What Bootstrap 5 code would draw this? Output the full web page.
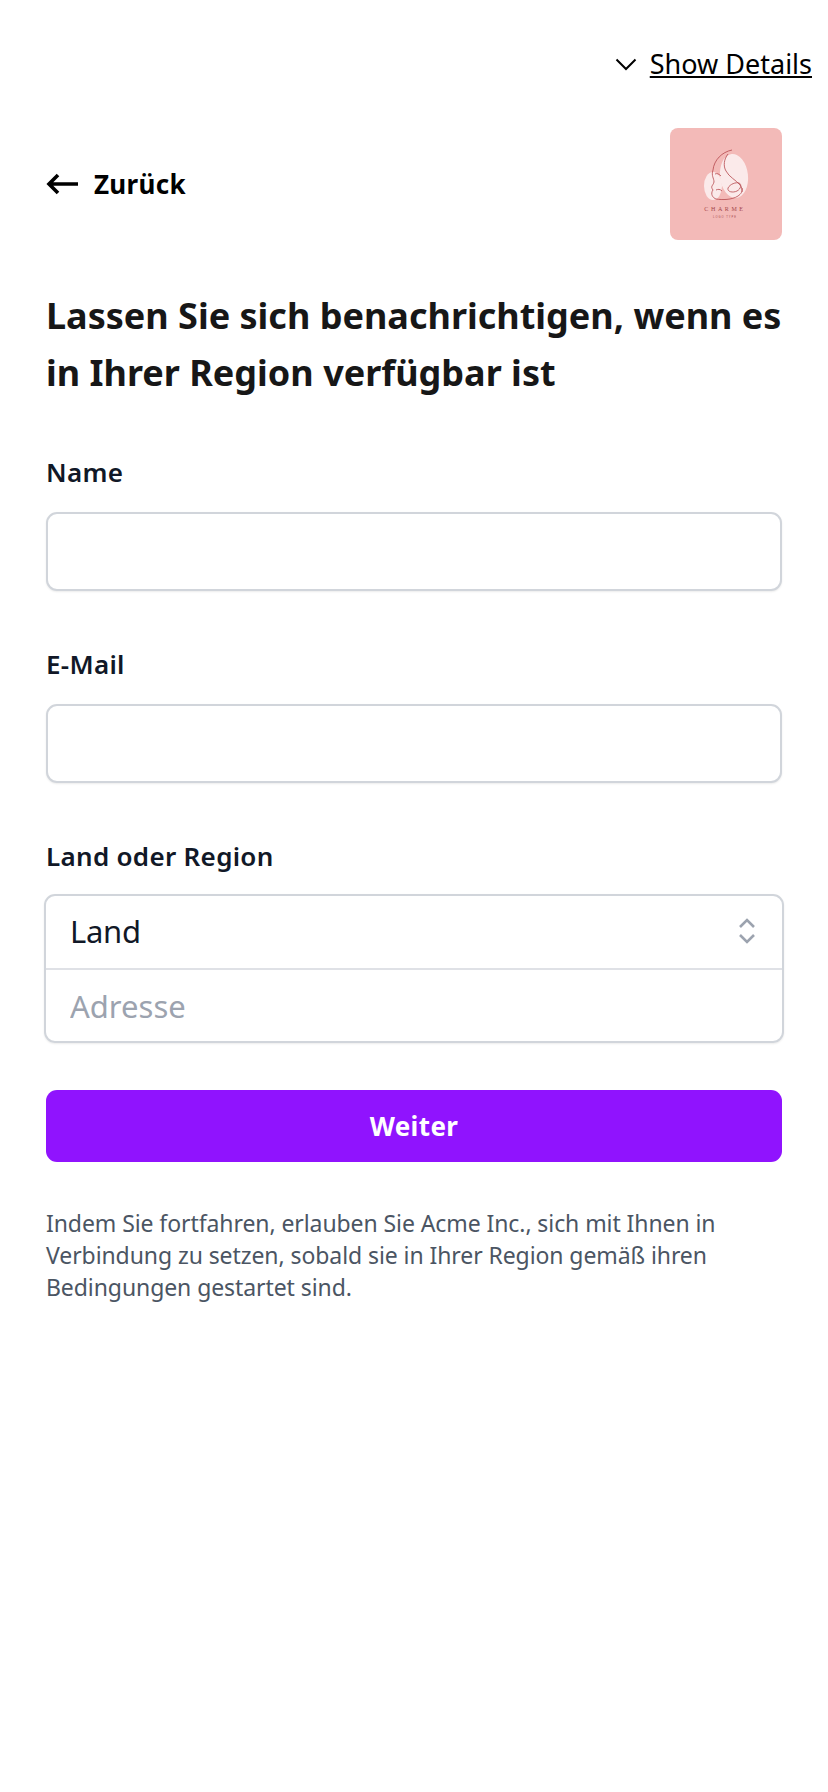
<!DOCTYPE html>
<html lang="de">
<head>
  <meta charset="UTF-8">
  <meta name="viewport" content="width=device-width, initial-scale=1.0">
  <title>Benachrichtigung</title>
  <link href="https://cdn.jsdelivr.net/npm/bootstrap@5.3.0/dist/css/bootstrap.min.css" rel="stylesheet">
  <style>
    body {
      background: #fff;
      font-family: "Noto Sans", sans-serif;
      color: #111827;
    }
    .seite {
      padding: 46px 16px 0 46px;
    }
    .details-link {
      height: 36px;
      font-size: 27px;
      color: #000;
      text-decoration: underline;
      gap: 13px;
    }
    .kopf {
      margin-top: 46px;
      padding-right: 30px;
    }
    .zurueck {
      color: #000;
      font-size: 26px;
      font-weight: 700;
      gap: 16px;
      text-decoration: none;
      letter-spacing: 0.3px;
    }
    .logo-box {
      width: 112px;
      height: 112px;
      border-radius: 8px;
      background: #f3bab8;
      overflow: hidden;
    }
    .formular {
      padding-right: 30px;
    }
    .titel {
      font-size: 36px;
      font-weight: 700;
      line-height: 57px;
      color: #171717;
      margin: 47px 0 0;
      white-space: nowrap;
    }
    .feld-label {
      display: block;
      font-size: 26px;
      font-weight: 600;
      line-height: 36px;
      margin: 0 0 22px;
      letter-spacing: 0.3px;
    }
    .feld-label.erstes {
      margin-top: 53px;
    }
    .feld-label.eng {
      margin-bottom: 20px;
    }
    .feld {
      height: 79px;
      border: 2px solid #d1d5db;
      border-radius: 11px;
      box-shadow: 0 1px 2px rgba(0,0,0,.08);
      margin-bottom: 55px;
    }
    .gruppe {
      height: 149px;
      border: 2px solid #d1d5db;
      border-radius: 11px;
      margin: 0 -2px;
      box-shadow: 0 1px 2px rgba(0,0,0,.08);
      overflow: hidden;
    }
    .gruppe-zeile {
      height: 73px;
      padding: 0 26px 0 24px;
      font-size: 31px;
      letter-spacing: -0.3px;
    }
    .gruppe-zeile.trenner {
      height: 74px;
      padding-bottom: 2px;
      border-bottom: 2px solid #dfe1e6;
    }
    .gruppe-zeile input {
      border: 0;
      padding: 0;
      width: 100%;
      outline: 0;
      color: #111827;
    }
    .gruppe-zeile input::placeholder {
      color: #9ca3af;
      opacity: 1;
    }
    .weiter {
      height: 72px;
      margin-top: 47px;
      background: #9013fe;
      border: 0;
      border-radius: 11px;
      color: #fff;
      font-size: 26px;
      font-weight: 700;
      letter-spacing: 0.4px;
    }
    .hinweis {
      margin: 45px 0 0;
      font-size: 23px;
      line-height: 32px;
      color: #4b5563;
      letter-spacing: -0.08px;
      white-space: nowrap;
    }
  </style>
</head>
<body>

<div class="seite">
  <div class="d-flex justify-content-end">
    <a href="#" class="details-link d-inline-flex align-items-center">
      <svg width="22" height="13" viewBox="0 0 22 13" fill="none" stroke="#000" stroke-width="2"><path d="M1.5 1.5l9.5 9.5 9.5-9.5"/></svg>
      <span>Show Details</span>
    </a>
  </div>

  <div class="kopf d-flex justify-content-between align-items-center">
    <a href="#" class="zurueck d-inline-flex align-items-center">
      <svg width="32" height="22" viewBox="0 0 32 22" fill="none" stroke="#000" stroke-width="3.6"><path d="M32 11H3M12 2l-9 9 9 9"/></svg>
      <span>Zurück</span>
    </a>
    <div class="logo-box">
      <svg width="112" height="112" viewBox="0 0 112 112" fill="none">
        <ellipse cx="64" cy="48" rx="14" ry="22" transform="rotate(-6 64 48)" fill="#fbeaea"/>
        <ellipse cx="43" cy="58" rx="9" ry="14" fill="#fbeaea"/>
        <path d="M62 22C52 24 44 32 43 42c-2 6 1 8 1 12-1 4-4 4-1 8-3 4 0 8 3 9 6 1 16 1 22-3 3-2 5-5 4-8" stroke="#b5484c" stroke-width=".8"/>
        <path d="M58 26c-4 5-5 12-2 17 3 6 10 9 14 14 2 2 2 5 2 7M58 60c2-4 8-6 11-5s2 6-2 8-10 1-9-3zM45 46c2-1 4 0 6 2M46 62c2-1 4-1 6 1" stroke="#b5484c" stroke-width=".8"/>
        <text x="55" y="83" text-anchor="middle" font-family="Liberation Serif, serif" font-size="6" letter-spacing="2.6" fill="#a3474b">CHARME</text>
        <text x="55" y="90" text-anchor="middle" font-family="Liberation Sans, sans-serif" font-size="2.6" letter-spacing="1" fill="#a3474b">LOGO TYPE</text>
      </svg>
    </div>
  </div>

  <form class="formular" onsubmit="return false">
    <h1 class="titel">Lassen Sie sich benachrichtigen, wenn es<br>in Ihrer Region verfügbar ist</h1>

    <label class="feld-label erstes" for="name">Name</label>
    <input id="name" type="text" class="form-control feld">

    <label class="feld-label" for="email">E-Mail</label>
    <input id="email" type="email" class="form-control feld">

    <label class="feld-label eng" for="adresse">Land oder Region</label>
    <div class="gruppe">
      <div class="gruppe-zeile trenner d-flex align-items-center justify-content-between">
        <span>Land</span>
        <svg width="18" height="26" viewBox="0 0 18 26" fill="none" stroke="#9ca3af" stroke-width="2.6"><path d="M2 9l7-7 7 7M2 17l7 7 7-7"/></svg>
      </div>
      <div class="gruppe-zeile d-flex align-items-center">
        <input id="adresse" type="text" placeholder="Adresse">
      </div>
    </div>

    <button type="submit" class="btn weiter w-100">Weiter</button>

    <p class="hinweis">Indem Sie fortfahren, erlauben Sie Acme Inc., sich mit Ihnen in<br>Verbindung zu setzen, sobald sie in Ihrer Region gemäß ihren<br>Bedingungen gestartet sind.</p>
  </form>
</div>

</body>
</html>
